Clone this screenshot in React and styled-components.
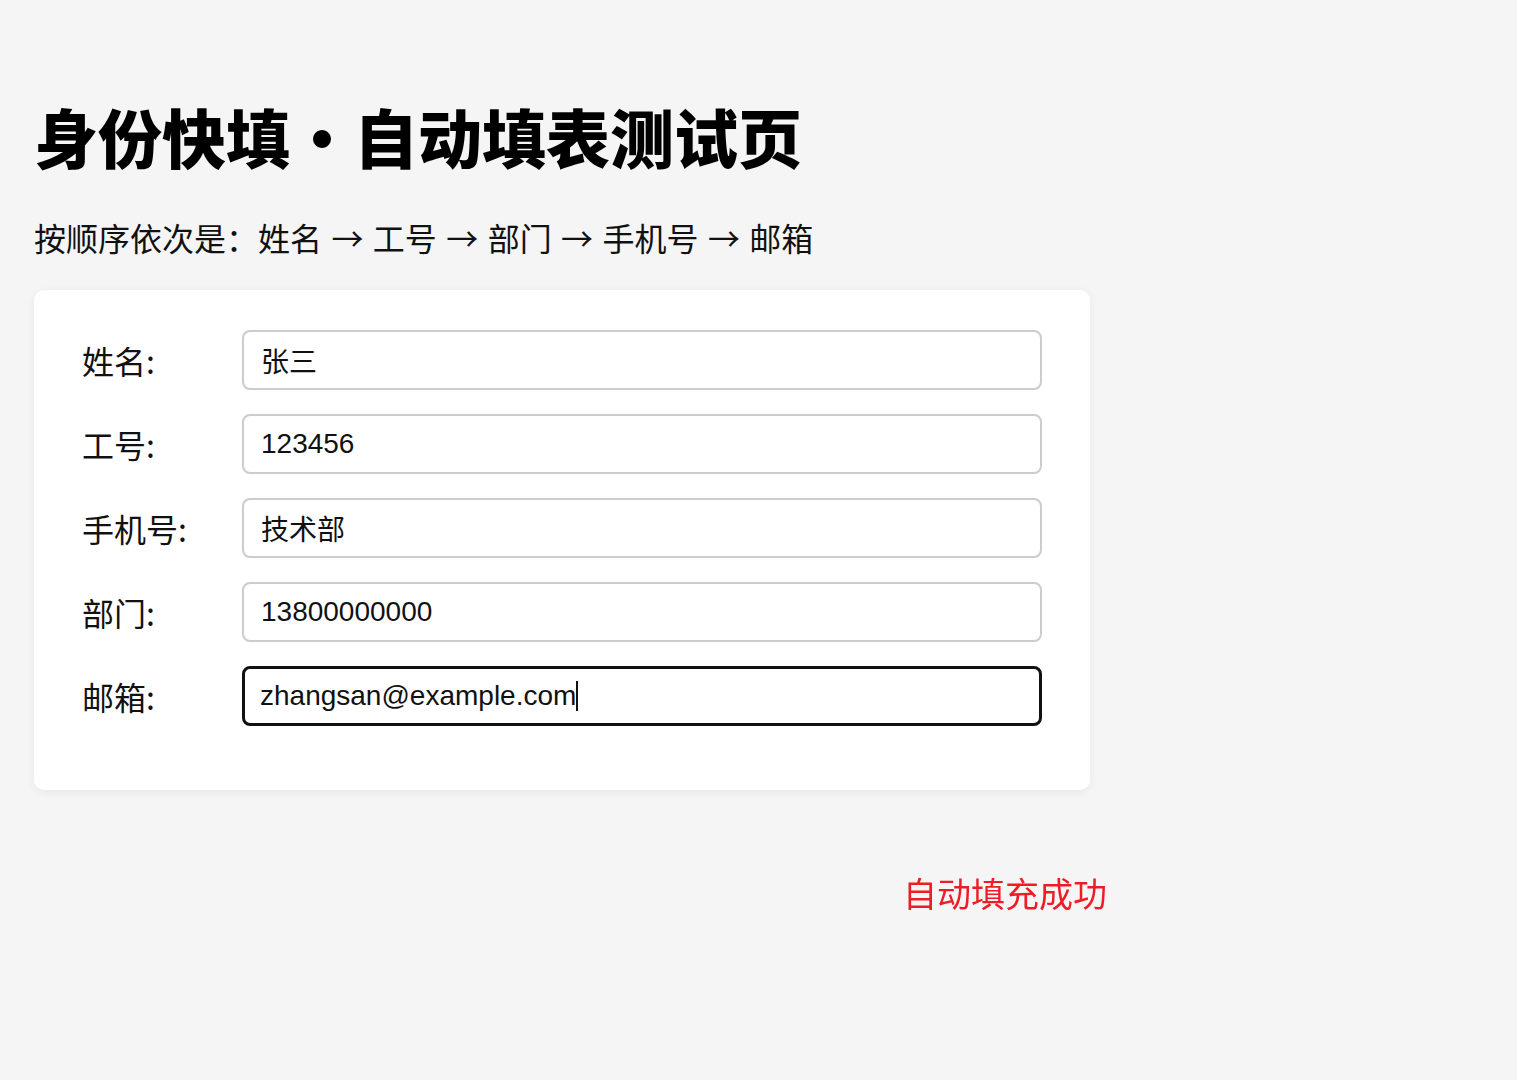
import styled, { createGlobalStyle } from 'styled-components'

const GlobalStyle = createGlobalStyle`
  html, body {
    margin: 0;
    padding: 0;
    background: #f5f5f5;
  }
  body {
    font-family: "Liberation Sans", "Noto Sans CJK SC", sans-serif;
    color: #111;
  }
`

const Page = styled.div`
  min-height: 1080px;
  padding: 97px 34px 0;
  box-sizing: border-box;
`

const Title = styled.h1`
  margin: 0;
  font-family: "Noto Sans CJK SC", sans-serif;
  font-size: 64px;
  font-weight: 900;
  line-height: 76px;
  color: #000;
`

const Subtitle = styled.p`
  margin: 44px 0 0;
  font-family: "Noto Sans CJK SC", sans-serif;
  font-size: 32px;
  line-height: 40px;
  word-spacing: 2.25px;
  color: #111;
`

const Card = styled.form`
  width: 1056px;
  box-sizing: border-box;
  margin-top: 33px;
  padding: 40px 48px 64px;
  background: #fff;
  border-radius: 10px;
  box-shadow: 0 2px 10px rgba(0, 0, 0, 0.06);
  display: flex;
  flex-direction: column;
  gap: 24px;
`

const Row = styled.div`
  display: flex;
  align-items: center;
`

const Label = styled.label`
  width: 160px;
  flex-shrink: 0;
  font-family: "Noto Sans CJK SC", sans-serif;
  font-size: 32px;
  color: #111;
`

const FieldWrap = styled.div`
  position: relative;
  width: 800px;
`

const Field = styled.input`
  display: block;
  width: 100%;
  height: 60px;
  box-sizing: border-box;
  padding: 0 17px;
  border: 2px solid #ccc;
  border-radius: 8px;
  background: #fff;
  font-family: "Liberation Sans", "Noto Sans CJK SC", sans-serif;
  font-size: 28px;
  color: #111;
  outline: none;
  ${(p) => p.$active && `
    border: 3px solid #111;
    padding: 0 15px;
  `}
`

const Caret = styled.span`
  position: absolute;
  left: 334px;
  top: 15px;
  width: 2px;
  height: 30px;
  background: #111;
  pointer-events: none;
`

const Toast = styled.div`
  position: fixed;
  left: 903px;
  top: 871px;
  font-family: "Noto Sans CJK SC", sans-serif;
  font-size: 34px;
  line-height: 44px;
  color: #ee1c25;
`

const fields = [
  { label: '姓名:', value: '张三' },
  { label: '工号:', value: '123456' },
  { label: '手机号:', value: '技术部' },
  { label: '部门:', value: '13800000000' },
  { label: '邮箱:', value: 'zhangsan@example.com', active: true },
]

function App() {
  return (
    <Page>
      <GlobalStyle />
      <Title>身份快填・自动填表测试页</Title>
      <Subtitle>按顺序依次是：姓名 → 工号 → 部门 → 手机号 → 邮箱</Subtitle>
      <Card onSubmit={(e) => e.preventDefault()}>
        {fields.map((f) => (
          <Row key={f.label}>
            <Label>{f.label}</Label>
            <FieldWrap>
              <Field defaultValue={f.value} $active={f.active} />
              {f.active && <Caret />}
            </FieldWrap>
          </Row>
        ))}
      </Card>
      <Toast>自动填充成功</Toast>
    </Page>
  )
}

export default App
